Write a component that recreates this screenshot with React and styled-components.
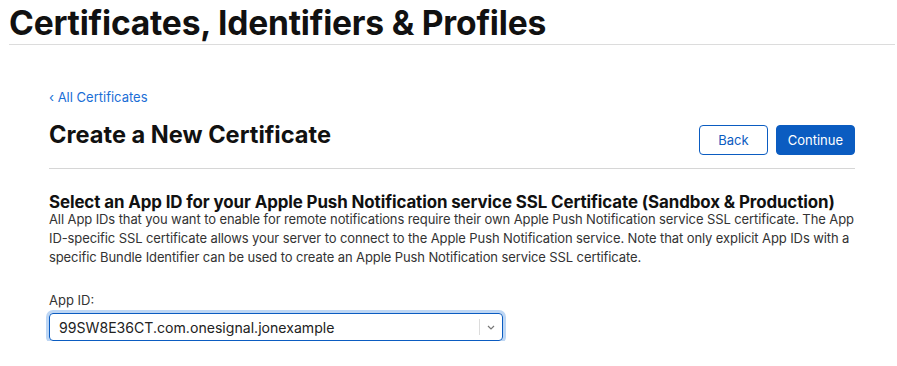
import React from "react"
import styled, { createGlobalStyle } from "styled-components"

const GlobalStyle = createGlobalStyle`
  body {
    margin: 0;
    background: #ffffff;
    font-family: Inter, "Liberation Sans", sans-serif;
    color: #1d1d1f;
  }
`

const Header = styled.header`
  margin: 0 2px 0 9px;
  height: 44px;
  border-bottom: 1px solid #dcdcdc;
  display: flex;
  align-items: center;

  h1 {
    margin: 0;
    font-size: 33.6px;
    font-weight: 700;
    letter-spacing: -0.2px;
    color: #111111;
  }
`

const Main = styled.main`
  width: 806px;
  margin-left: 49px;
  padding-top: 42px;
`

const BackLink = styled.a`
  font-size: 13px;
  color: #1a6ed6;
  text-decoration: none;
  line-height: 20px;
  display: block;
`

const TitleRow = styled.div`
  display: flex;
  align-items: flex-start;
  justify-content: space-between;
  margin-top: 13px;
  padding-bottom: 13px;
  border-bottom: 1px solid #d6d6d6;

  h2 {
    margin: 0;
    font-size: 23.6px;
    line-height: 30px;
    font-weight: 700;
    color: #111111;
  }
`

const Buttons = styled.div`
  display: flex;
  gap: 8px;
  margin-top: 5px;
`

const Button = styled.button`
  height: 30px;
  padding: 0 ${(p) => (p.$primary ? "11px" : "18px")};
  border-radius: 4px;
  font-family: inherit;
  font-size: 13px;
  border: 1px solid #0b5cc1;
  background: ${(p) => (p.$primary ? "#0b5cc1" : "#ffffff")};
  color: ${(p) => (p.$primary ? "#ffffff" : "#0b5cc1")};
`

const Section = styled.section`
  margin-top: 25px;

  h3 {
    margin: 0;
    font-size: 16.9px;
    font-weight: 700;
    line-height: 16px;
    letter-spacing: -0.1px;
    color: #111111;
  }

  p {
    margin: 0;
    font-size: 13px;
    line-height: 19px;
    letter-spacing: -0.1px;
    color: #333333;
  }
`

const Field = styled.div`
  margin-top: 24px;

  label {
    display: block;
    font-size: 13px;
    color: #333333;
    line-height: 18px;
    margin-bottom: 4px;
  }
`

const Select = styled.div`
  width: 452px;
  height: 26px;
  border: 1px solid #0b5cc1;
  border-radius: 4px;
  box-shadow: 0 0 0 3px #bdd6f4;
  display: flex;
  align-items: center;
  font-size: 14.1px;
  color: #222222;

  span {
    flex: 1;
    padding-left: 9px;
  }
`

const Arrow = styled.div`
  width: 22px;
  height: 16px;
  border-left: 1px solid #dcdcdc;
  display: flex;
  align-items: center;
  justify-content: center;
  color: #777777;
`

export default function App() {
  return (
    <>
      <GlobalStyle />
      <Header>
        <h1>Certificates, Identifiers &amp; Profiles</h1>
      </Header>
      <Main>
        <BackLink href="#">‹ All Certificates</BackLink>
        <TitleRow>
          <h2>Create a New Certificate</h2>
          <Buttons>
            <Button>Back</Button>
            <Button $primary>Continue</Button>
          </Buttons>
        </TitleRow>
        <Section>
          <h3>Select an App ID for your Apple Push Notification service SSL Certificate (Sandbox &amp; Production)</h3>
          <p>
            All App IDs that you want to enable for remote notifications require their own Apple Push Notification service SSL certificate. The App<br />
            ID-specific SSL certificate allows your server to connect to the Apple Push Notification service. Note that only explicit App IDs with a<br />
            specific Bundle Identifier can be used to create an Apple Push Notification service SSL certificate.
          </p>
        </Section>
        <Field>
          <label>App ID:</label>
          <Select>
            <span>99SW8E36CT.com.onesignal.jonexample</span>
            <Arrow>
              <svg width="8" height="5" viewBox="0 0 8 5" fill="none" stroke="currentColor" strokeWidth="1.2">
                <path d="M1 1l3 3 3-3" />
              </svg>
            </Arrow>
          </Select>
        </Field>
      </Main>
    </>
  )
}
